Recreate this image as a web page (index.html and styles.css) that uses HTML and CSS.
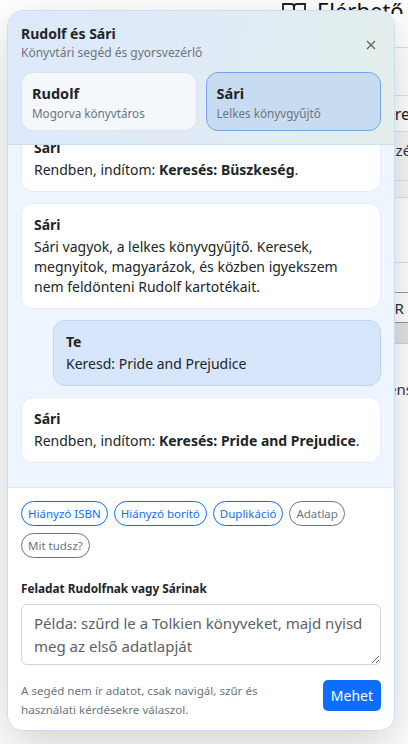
FILE: index.html
```html
<!DOCTYPE html>
<html lang="hu">
<head>
<meta charset="utf-8">
<title>Rudolf és Sári</title>
<link rel="stylesheet" href="styles.css">
</head>
<body>
<div class="page">
  <div class="topbar">
    <svg class="book" width="26" height="26" viewBox="0 0 26 26" fill="none" stroke="#222" stroke-width="1.8"><path d="M2 4h8a3 3 0 0 1 3 3v17a2 2 0 0 0-2-2H2z"/><path d="M24 4h-8a3 3 0 0 0-3 3v17a2 2 0 0 1 2-2h9z"/></svg>
    <span class="avail">Elérhető</span>
  </div>
  <div class="strip">
    <div class="bg-row r1"></div>
    <div class="bg-row r2"></div>
    <div class="bg-row r3"><span class="big">Prejudice</span></div>
    <div class="bg-row r4 grey"><span class="small">Rendezés</span></div>
    <div class="bg-row r5 grey"></div>
    <div class="bg-row r6"></div>
    <div class="bg-row r7"></div>
    <div class="bg-row r8"><span class="small">KÖNYVTÁR</span></div>
    <div class="bg-row r9 band"></div>
    <div class="bg-row r10"><span class="small">Dickens</span></div>
  </div>
</div>

<aside class="panel">
  <header class="panel-head">
    <div class="head-top">
      <div>
        <div class="title">Rudolf és Sári</div>
        <div class="subtitle">Könyvtári segéd és gyorsvezérlő</div>
      </div>
      <button class="close" aria-label="Bezárás">
        <svg width="10" height="10" viewBox="0 0 10 10" stroke="#5f6368" stroke-width="1.3"><path d="M1 1l8 8M9 1l-8 8"/></svg>
      </button>
    </div>
    <div class="personas">
      <div class="persona">
        <div class="p-name">Rudolf</div>
        <div class="p-desc">Mogorva könyvtáros</div>
      </div>
      <div class="persona active">
        <div class="p-name">Sári</div>
        <div class="p-desc">Lelkes könyvgyűjtő</div>
      </div>
    </div>
  </header>

  <div class="chat">
    <div class="msg user"><div class="who">Te</div><div>Keresd: Büszkeség</div></div>
    <div class="msg"><div class="who">Sári</div><div>Rendben, indítom: <b>Keresés: Büszkeség</b>.</div></div>
    <div class="msg"><div class="who">Sári</div><div>Sári vagyok, a lelkes könyvgyűjtő. Keresek, megnyitok, magyarázok, és közben igyekszem nem feldönteni Rudolf kartotékait.</div></div>
    <div class="msg user"><div class="who">Te</div><div>Keresd: Pride and Prejudice</div></div>
    <div class="msg"><div class="who">Sári</div><div>Rendben, indítom: <b>Keresés: Pride and Prejudice</b>.</div></div>
  </div>

  <div class="composer">
    <div class="chips">
      <button class="chip blue">Hiányzó ISBN</button>
      <button class="chip blue">Hiányzó borító</button>
      <button class="chip blue">Duplikáció</button>
      <button class="chip grey">Adatlap</button>
      <button class="chip grey">Mit tudsz?</button>
    </div>
    <label class="task-label" for="task">Feladat Rudolfnak vagy Sárinak</label>
    <textarea id="task" class="task" rows="2" placeholder="Példa: szűrd le a Tolkien könyveket, majd nyisd meg az első adatlapját"></textarea>
    <div class="foot">
      <p class="note">A segéd nem ír adatot, csak navigál, szűr és használati kérdésekre válaszol.</p>
      <button class="go">Mehet</button>
    </div>
  </div>
</aside>
</body>
</html>
```

FILE: styles.css
```css
* { box-sizing: border-box; }

html, body {
  margin: 0;
  padding: 0;
  background: #fff;
  font-family: "Noto Sans", "Open Sans", sans-serif;
  color: #212529;
  overflow: hidden;
  height: 744px;
}
body { position: relative; }

/* background page (only its right strip is visible) */
.page {
  display: flex;
  flex-direction: column;
}
.topbar {
  height: 14px;
  display: flex;
  align-items: flex-end;
  gap: 10px;
  padding-left: 281px;
  overflow: hidden;
  white-space: nowrap;
}
.book { flex-shrink: 0; margin-bottom: -12px; }
.avail { font-size: 22px; line-height: 26px; margin-bottom: -9px; color: #111; }

.strip {
  margin-left: 395px;
  width: 13px;
  overflow: hidden;
  display: flex;
  flex-direction: column;
}
.bg-row {
  flex-shrink: 0;
  border-bottom: 1px solid #dee2e6;
  white-space: nowrap;
  overflow: hidden;
  display: flex;
  align-items: center;
}
.bg-row span { flex-shrink: 0; }
.r1 { height: 34px; }
.r2 { height: 48px; }
.r3 { height: 36px; }
.r3 .big { margin-left: -10px; }
.r4 { height: 49px; align-items: flex-start; padding-top: 8px; }
.r4 .small { margin-left: -44px; }
.r5 { height: 17px; }
.r6 { height: 65px; }
.r7 { height: 30px; border-bottom-color: #999; }
.r8 { height: 30px; border-bottom-color: #999; }
.r8 .small { margin-left: -67px; }
.r9 { height: 21px; }
.r10 { height: 80px; border-bottom: 0; align-items: flex-start; padding-top: 35px; }
.r10 .small { margin-left: -37px; }
.big { font-size: 16px; color: #222; }
.small { font-size: 15px; color: #333; }
.grey { background: #f7f7f7; }
.band { background: #e4e4e4; border-bottom-color: #d6d6d6; }

/* panel */
.panel {
  position: absolute;
  z-index: 10;
  left: 7px;
  top: 10px;
  width: 388px;
  height: 721px;
  border: 1px solid #c9dcf6;
  border-radius: 16px;
  background: #fff;
  box-shadow: 0 16px 48px rgba(0, 0, 0, 0.175);
  overflow: hidden;
  display: flex;
  flex-direction: column;
}

.panel-head {
  background: linear-gradient(100deg, #dde9fb 0%, #e1ebf6 55%, #e3efea 100%);
  border-bottom: 1px solid #cfdeee;
  padding: 13px 13px 13px;
  flex-shrink: 0;
}
.head-top {
  display: flex;
  align-items: center;
  justify-content: space-between;
}
.title {
  font-size: 14px;
  font-weight: 700;
  line-height: 20px;
}
.subtitle {
  font-size: 12px;
  line-height: 18px;
  color: #6c757d;
}
.close {
  border: 0;
  background: transparent;
  width: 18px;
  height: 18px;
  padding: 0;
  margin-right: 1px;
  margin-top: 4px;
  display: flex;
  align-items: center;
  justify-content: center;
}

.personas {
  margin-top: 10px;
  display: grid;
  grid-template-columns: 1fr 1fr;
  gap: 9px;
}
.persona {
  border: 1px solid #dde3ea;
  border-radius: 12px;
  background: #f4f7fb;
  padding: 9px 10px 8px;
}
.persona.active {
  background: #c8dcf1;
  border-color: #6fa6f5;
}
.p-name {
  font-size: 14.5px;
  font-weight: 700;
  line-height: 22px;
}
.p-desc {
  font-size: 11.7px;
  line-height: 18px;
  color: #6c757d;
}

/* chat */
.chat {
  flex: 1;
  min-height: 0;
  overflow: hidden;
  background: #eef5ff;
  border-bottom: 1px solid #e2e8f0;
  display: flex;
  flex-direction: column;
  justify-content: flex-end;
  gap: 11px;
  padding: 0 13px 24px;
}
.msg {
  flex-shrink: 0;
  background: #fff;
  border: 1px solid #e6ecf3;
  border-radius: 12px;
  padding: 11px 12px;
  font-size: 14px;
  line-height: 20px;
}
.msg .who {
  font-weight: 700;
  margin-bottom: 2px;
}
.msg b { font-weight: 700; }
.msg.user {
  margin-left: 32px;
  background: #d8e6fc;
  border-color: #bfd4f3;
}

/* composer */
.composer {
  flex-shrink: 0;
  padding: 13px 13px 11px;
  display: flex;
  flex-direction: column;
  background: #fff;
}
.chips {
  display: flex;
  flex-wrap: wrap;
  gap: 7px 6px;
}
.chip {
  font-family: inherit;
  font-size: 11.5px;
  line-height: 17px;
  padding: 3px 6px;
  border-radius: 999px;
  background: #fff;
  border: 1px solid;
}
.chip.blue { color: #0d6efd; border-color: #0d6efd; }
.chip.grey { color: #6c757d; border-color: #6c757d; }

.task-label {
  margin-top: 21px;
  margin-bottom: 7px;
  font-size: 11.8px;
  font-weight: 700;
  line-height: 18px;
}
.task {
  font-family: inherit;
  font-size: 15px;
  line-height: 23px;
  height: 61px;
  padding: 7px 12px 6px;
  border: 1px solid #ced4da;
  border-radius: 6px;
  color: #212529;
  resize: vertical;
  width: 100%;
}
.task::placeholder { color: #5b6167; opacity: 1; }

.foot {
  margin-top: 16px;
  display: flex;
  align-items: flex-start;
  justify-content: space-between;
  gap: 12px;
}
.note {
  margin: 0;
  font-size: 11.6px;
  line-height: 19px;
  color: #6c757d;
  max-width: 250px;
}
.go {
  font-family: inherit;
  font-size: 14px;
  line-height: 21px;
  padding: 5px 8px;
  border: 0;
  border-radius: 5px;
  background: #0d6efd;
  color: #fff;
  flex-shrink: 0;
  margin-top: -1px;
}
```
